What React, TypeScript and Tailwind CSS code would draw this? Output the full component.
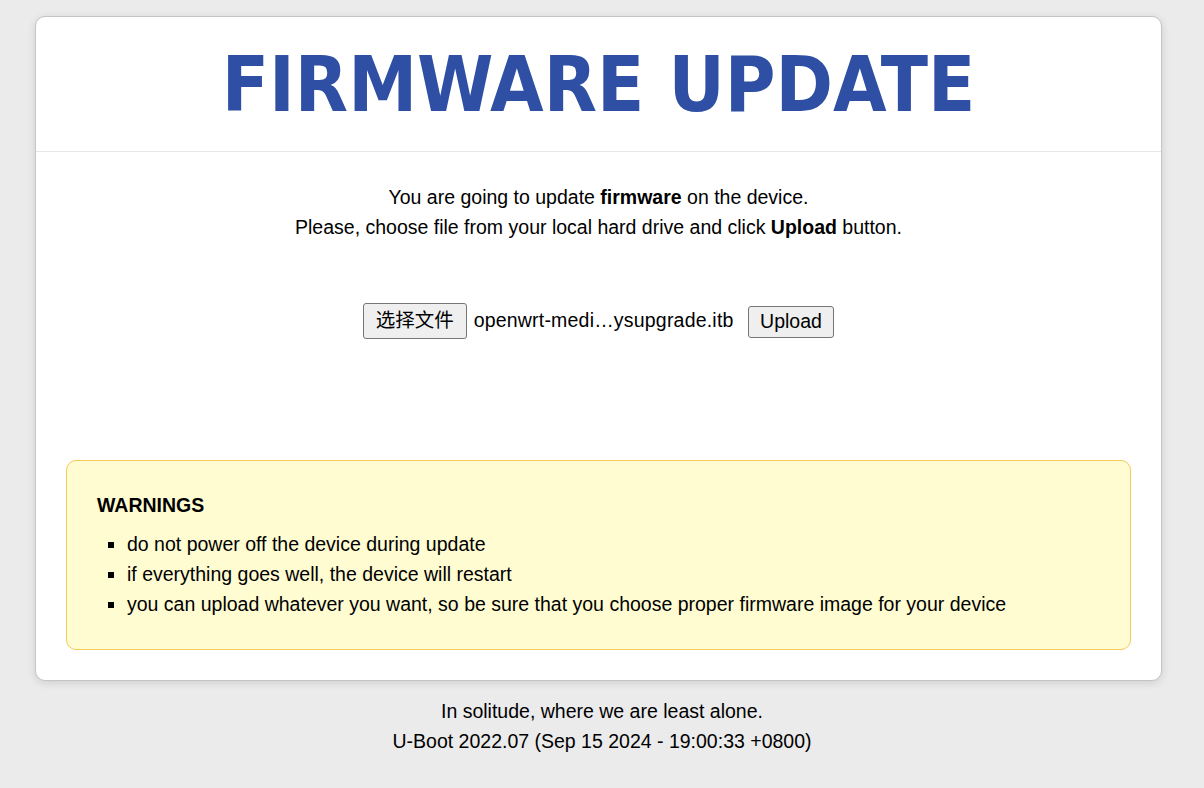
import React from "react";

export default function App() {
  const sans = { fontFamily: '"Liberation Sans", Arial, "Noto Sans CJK SC", sans-serif' };
  return (
    <div className="min-h-[788px] w-full bg-[#ebebeb] pt-[16px]" style={sans}>
      <div className="ml-[35px] w-[1127px] rounded-[10px] border border-[#c4c4c4] bg-white shadow-[0_2px_8px_rgba(0,0,0,0.12)]">
        <div className="flex h-[135px] items-center justify-center border-b border-[#e6e6e6]">
          <h1
            className="text-[77px] font-bold leading-none text-[#2f4fa5]"
            style={{ fontFamily: '"DejaVu Sans Condensed", "DejaVu Sans", Verdana, sans-serif', fontStretch: "condensed" }}
          >
            FIRMWARE UPDATE
          </h1>
        </div>
        <div className="px-[30px] pt-[30px] pb-[30px]">
          <div className="text-center text-[19.5px] leading-[30px] text-black">
            <p>
              You are going to update <b>firmware</b> on the device.
            </p>
            <p>
              Please, choose file from your local hard drive and click <b>Upload</b> button.
            </p>
          </div>
          <div className="mt-[61px] flex items-center justify-center text-[19.5px] text-black">
            <span className="flex h-[36px] items-center rounded-[3px] border border-[#767676] bg-[#efefef] px-[12px]">
              选择文件
            </span>
            <span className="ml-[7px] tracking-[0.2px]">openwrt-medi…ysupgrade.itb</span>
            <span className="ml-[14px] mt-[2px] flex h-[32px] items-center rounded-[3px] border border-[#767676] bg-[#efefef] px-[11.5px]">
              Upload
            </span>
          </div>
          <div className="mt-[121px] rounded-[10px] border border-[#f5c95a] bg-[#fffcd2] px-[30px] pt-[32px] pb-[30px] text-[19.5px] text-black">
            <h2 className="font-bold leading-[24px]">WARNINGS</h2>
            <ul className="mt-[12px] list-[square] pl-[30px] leading-[30px]">
              <li>do not power off the device during update</li>
              <li>if everything goes well, the device will restart</li>
              <li>you can upload whatever you want, so be sure that you choose proper firmware image for your device</li>
            </ul>
          </div>
        </div>
      </div>
      <div className="mt-[15px] text-center text-[19.5px] leading-[30px] text-black">
        <p>In solitude, where we are least alone.</p>
        <p>U-Boot 2022.07 (Sep 15 2024 - 19:00:33 +0800)</p>
      </div>
    </div>
  );
}
